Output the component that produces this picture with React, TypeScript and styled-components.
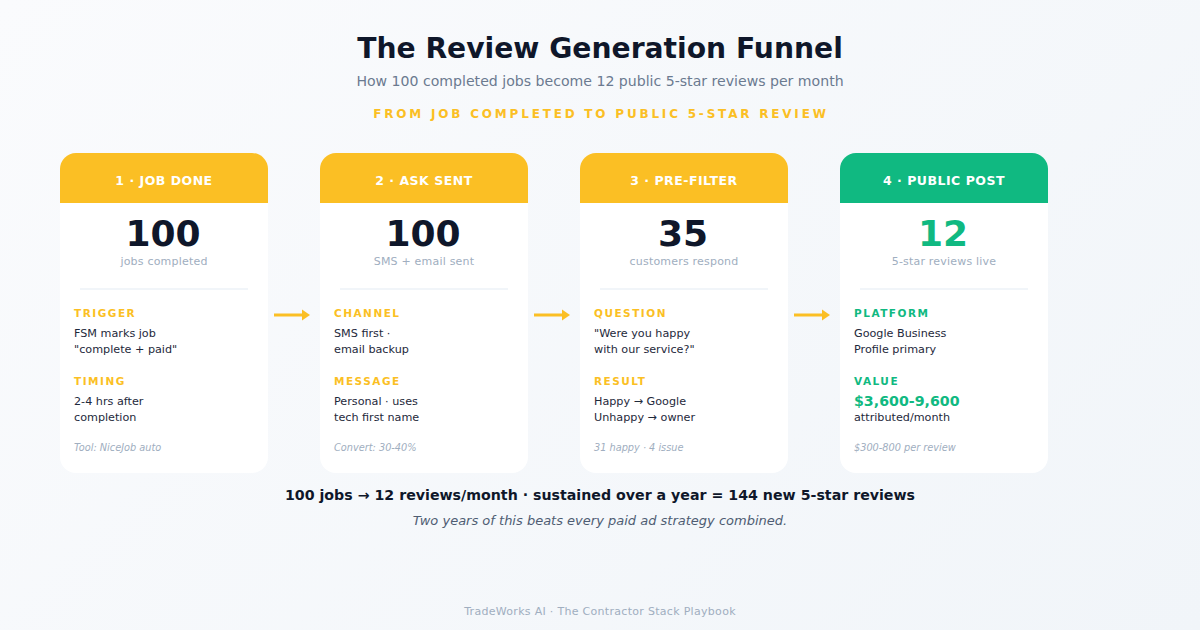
import React from "react";
import styled, { createGlobalStyle } from "styled-components";

const Global = createGlobalStyle`
  html, body { margin: 0; padding: 0; }
  body { font-family: "DejaVu Sans", sans-serif; }
`;

const AMBER = "#fbbf24";
const GREEN = "#10b981";
const MUTED = "#a0aec0";

const Page = styled.div`
  width: 1200px;
  height: 630px;
  overflow: hidden;
  display: flex;
  flex-direction: column;
  background: linear-gradient(135deg, #fafbfd 0%, #f1f5f9 100%);
`;
const Header = styled.header`
  display: flex;
  flex-direction: column;
  align-items: center;
  padding-top: 31px;
`;
const Title = styled.h1`
  margin: 0;
  font-size: 28.2px;
  line-height: 36px;
  font-weight: 700;
  color: #0f172a;
`;
const Subtitle = styled.p`
  margin: 4px 0 0;
  font-size: 14.1px;
  line-height: 20px;
  color: #6b7a90;
`;
const Kicker = styled.p`
  margin: 15px 0 0;
  padding-left: 2px;
  font-size: 12px;
  line-height: 16px;
  font-weight: 700;
  letter-spacing: 2.8px;
  color: ${AMBER};
`;
const Funnel = styled.section`
  display: flex;
  align-items: stretch;
  padding: 31px 0 0 60px;
`;
const Card = styled.article`
  width: 208px;
  height: 320px;
  flex: none;
  display: flex;
  flex-direction: column;
  background: #fff;
  border-radius: 16px;
  overflow: hidden;
`;
const CardHead = styled.div<{ $c: string }>`
  height: 50px;
  flex: none;
  box-sizing: border-box;
  display: flex;
  align-items: center;
  justify-content: center;
  padding-top: 5px;
  background: ${p => p.$c};
  color: #fff;
  font-size: 12.5px;
  font-weight: 700;
  letter-spacing: 0.5px;
`;
const Big = styled.div<{ $c: string }>`
  margin-top: 10px;
  padding-right: 2px;
  text-align: center;
  font-size: 36px;
  line-height: 42px;
  font-weight: 700;
  color: ${p => p.$c};
`;
const BigLabel = styled.div`
  text-align: center;
  font-size: 11px;
  line-height: 14px;
  letter-spacing: 0.2px;
  color: ${MUTED};
`;
const Rule = styled.hr`
  margin: 19px 20px 0;
  border: 0;
  height: 2px;
  background: #f1f5f9;
`;
const Body = styled.div`
  display: flex;
  flex-direction: column;
  padding: 16px 14px 0;
`;
const Block = styled.div`
  height: 68px;
  display: flex;
  flex-direction: column;
`;
const Label = styled.div<{ $c: string }>`
  font-size: 10.5px;
  line-height: 14px;
  font-weight: 700;
  letter-spacing: 1.5px;
  color: ${p => p.$c};
`;
const Text = styled.div`
  margin-top: 6px;
  font-size: 11.2px;
  line-height: 16px;
  color: #1e293b;
`;
const Value = styled.div`
  margin-top: 5px;
  font-size: 14.2px;
  line-height: 16px;
  font-weight: 700;
  color: ${GREEN};
`;
const Attr = styled.div`
  margin-top: 1px;
  font-size: 11.2px;
  line-height: 16px;
  color: #1e293b;
`;
const Note = styled.div`
  margin-top: -1px;
  font-size: 9.75px;
  line-height: 14px;
  font-style: italic;
  color: ${MUTED};
`;
const ArrowSlot = styled.div`
  width: 52px;
  flex: none;
  box-sizing: border-box;
  display: flex;
  justify-content: center;
  padding: 156px 4px 0 0;
`;
const Summary = styled.p`
  margin: 12px 0 0;
  text-align: center;
  font-size: 14.2px;
  line-height: 20px;
  font-weight: 700;
  color: #0f172a;
`;
const Closing = styled.p`
  margin: 7px 0 0;
  text-align: center;
  font-size: 13px;
  line-height: 18px;
  font-style: italic;
  color: #4f5d73;
`;
const Footer = styled.footer`
  margin-top: auto;
  padding-bottom: 10px;
  text-align: center;
  font-size: 11px;
  line-height: 16px;
  letter-spacing: 0.3px;
  color: ${MUTED};
`;

const Arrow = () => (
  <svg width="36" height="12" viewBox="0 0 36 12" aria-hidden="true">
    <path d="M0 6H30" stroke={AMBER} strokeWidth="3" fill="none" />
    <path d="M28 0.5L36 6L28 11.5Z" fill={AMBER} />
  </svg>
);

type S = {
  head: string; c: string; n: string; sub: string;
  l1: string; t1: [string, string]; l2: string; t2?: [string, string];
  value?: string; attr?: string; note: string;
};
const steps: S[] = [
  { head: "1 · JOB DONE", c: AMBER, n: "100", sub: "jobs completed", l1: "TRIGGER", t1: ["FSM marks job", '"complete + paid"'], l2: "TIMING", t2: ["2-4 hrs after", "completion"], note: "Tool: NiceJob auto" },
  { head: "2 · ASK SENT", c: AMBER, n: "100", sub: "SMS + email sent", l1: "CHANNEL", t1: ["SMS first ·", "email backup"], l2: "MESSAGE", t2: ["Personal · uses", "tech first name"], note: "Convert: 30-40%" },
  { head: "3 · PRE-FILTER", c: AMBER, n: "35", sub: "customers respond", l1: "QUESTION", t1: ['"Were you happy', 'with our service?"'], l2: "RESULT", t2: ["Happy → Google", "Unhappy → owner"], note: "31 happy · 4 issue" },
  { head: "4 · PUBLIC POST", c: GREEN, n: "12", sub: "5-star reviews live", l1: "PLATFORM", t1: ["Google Business", "Profile primary"], l2: "VALUE", value: "$3,600-9,600", attr: "attributed/month", note: "$300-800 per review" },
];

export default function App() {
  return (
    <Page>
      <Global />
      <Header>
        <Title>The Review Generation Funnel</Title>
        <Subtitle>How 100 completed jobs become 12 public 5-star reviews per month</Subtitle>
        <Kicker>FROM JOB COMPLETED TO PUBLIC 5-STAR REVIEW</Kicker>
      </Header>
      <Funnel>
        {steps.map((s, i) => (
          <React.Fragment key={s.head}>
            <Card>
              <CardHead $c={s.c}>{s.head}</CardHead>
              <Big $c={s.c === GREEN ? GREEN : "#0f172a"}>{s.n}</Big>
              <BigLabel>{s.sub}</BigLabel>
              <Rule />
              <Body>
                <Block>
                  <Label $c={s.c}>{s.l1}</Label>
                  <Text>{s.t1[0]}<br />{s.t1[1]}</Text>
                </Block>
                <Block>
                  <Label $c={s.c}>{s.l2}</Label>
                  {s.t2 ? (
                    <Text>{s.t2[0]}<br />{s.t2[1]}</Text>
                  ) : (
                    <>
                      <Value>{s.value}</Value>
                      <Attr>{s.attr}</Attr>
                    </>
                  )}
                </Block>
                <Note>{s.note}</Note>
              </Body>
            </Card>
            {i < 3 && <ArrowSlot><Arrow /></ArrowSlot>}
          </React.Fragment>
        ))}
      </Funnel>
      <Summary>100 jobs → 12 reviews/month · sustained over a year = 144 new 5-star reviews</Summary>
      <Closing>Two years of this beats every paid ad strategy combined.</Closing>
      <Footer>TradeWorks AI · The Contractor Stack Playbook</Footer>
    </Page>
  );
}
